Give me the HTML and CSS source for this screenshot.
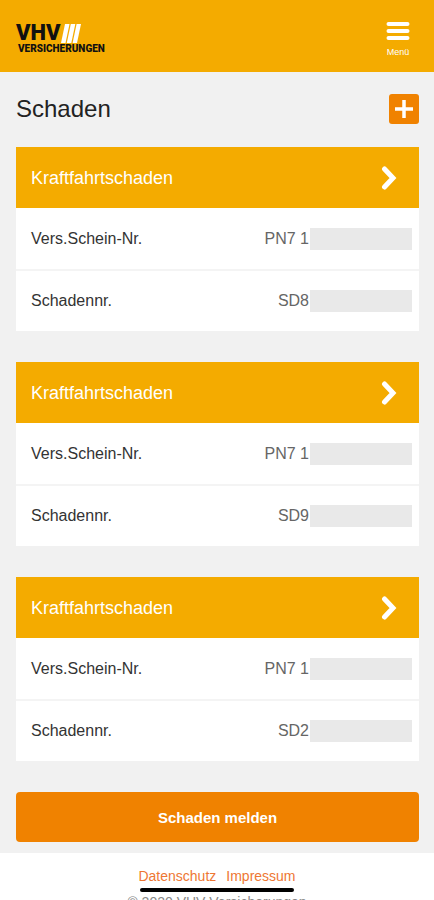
FILE: index.html
```html
<!DOCTYPE html>
<html lang="de">
<head>
    <meta charset="UTF-8">
    <meta name="viewport" content="width=device-width, initial-scale=1.0">
    <title>VHV Versicherungen - Schaden</title>
    <link rel="stylesheet" href="styles.css">
</head>
<body>
    <header class="header">
        <a href="#" class="logo">
            <span class="logo-top">
                VHV
                <svg class="logo-stripes" width="20" height="19" viewBox="0 0 20 19" fill="#fff" aria-hidden="true">
                    <path d="M4 0h4.500l-4 19H0z"/>
                    <path d="M9.800 0h4.500l-4 19H5.800z"/>
                    <path d="M15.600 0H20l-4 19h-4.400z"/>
                </svg>
            </span>
            <span class="logo-sub">VERSICHERUNGEN</span>
        </a>
        <button type="button" class="menu-button">
            <svg width="24" height="20" viewBox="0 0 24 20" stroke="#fff" stroke-width="4" stroke-linecap="round" aria-hidden="true">
                <path d="M2.500 3h19M2.500 10h19M2.500 17h19"/>
            </svg>
            <span>Menü</span>
        </button>
    </header>

    <main class="main">
        <div class="title-row">
            <h1>Schaden</h1>
            <button type="button" class="add-button" aria-label="Schaden hinzufügen">
                <svg width="18" height="18" viewBox="0 0 18 18" stroke="#fff" stroke-width="3.500" aria-hidden="true">
                    <path d="M9 0v18M0 9h18"/>
                </svg>
            </button>
        </div>

        <section class="card">
            <a href="#" class="card-head">
                <h2>Kraftfahrtschaden</h2>
                <svg width="16" height="24" viewBox="0 0 16 24" fill="none" stroke="#fff" stroke-width="5" stroke-linecap="round" aria-hidden="true">
                    <path d="M3.500 3l8.500 9-8.500 9"/>
                </svg>
            </a>
            <dl class="card-rows">
                <div class="row">
                    <dt>Vers.Schein-Nr.</dt>
                    <dd>PN7 1<span class="masked"></span></dd>
                </div>
                <div class="row">
                    <dt>Schadennr.</dt>
                    <dd>SD8<span class="masked"></span></dd>
                </div>
            </dl>
        </section>

        <section class="card">
            <a href="#" class="card-head">
                <h2>Kraftfahrtschaden</h2>
                <svg width="16" height="24" viewBox="0 0 16 24" fill="none" stroke="#fff" stroke-width="5" stroke-linecap="round" aria-hidden="true">
                    <path d="M3.500 3l8.500 9-8.500 9"/>
                </svg>
            </a>
            <dl class="card-rows">
                <div class="row">
                    <dt>Vers.Schein-Nr.</dt>
                    <dd>PN7 1<span class="masked"></span></dd>
                </div>
                <div class="row">
                    <dt>Schadennr.</dt>
                    <dd>SD9<span class="masked"></span></dd>
                </div>
            </dl>
        </section>

        <section class="card">
            <a href="#" class="card-head">
                <h2>Kraftfahrtschaden</h2>
                <svg width="16" height="24" viewBox="0 0 16 24" fill="none" stroke="#fff" stroke-width="5" stroke-linecap="round" aria-hidden="true">
                    <path d="M3.500 3l8.500 9-8.500 9"/>
                </svg>
            </a>
            <dl class="card-rows">
                <div class="row">
                    <dt>Vers.Schein-Nr.</dt>
                    <dd>PN7 1<span class="masked"></span></dd>
                </div>
                <div class="row">
                    <dt>Schadennr.</dt>
                    <dd>SD2<span class="masked"></span></dd>
                </div>
            </dl>
        </section>

        <button type="button" class="report-button">Schaden melden</button>
    </main>

    <footer class="footer">
        <nav class="footer-links">
            <a href="#">Datenschutz</a>
            <a href="#">Impressum</a>
        </nav>
        <p>© 2020 VHV Versicherungen</p>
    </footer>

    <div class="home-indicator"></div>
</body>
</html>
```

FILE: styles.css
```css
* {
    margin: 0;
    padding: 0;
    box-sizing: border-box;
}

body {
    height: 100vh;
    overflow: hidden;
    background: #fff;
    color: #333;
    font-family: 'Liberation Sans', Arial, sans-serif;
    font-size: 16px;
}

a {
    text-decoration: none;
}

button {
    border: none;
    color: #fff;
    font-family: inherit;
    cursor: pointer;
}

svg {
    display: block;
}

/* Header */
.header {
    display: flex;
    justify-content: space-between;
    align-items: center;
    height: 72px;
    padding: 6px 24px 0 16px;
    background: #f4ab00;
}

.logo {
    display: flex;
    flex-direction: column;
    color: #111;
    font-family: Roboto, 'Liberation Sans', sans-serif;
    font-weight: 900;
}

.logo-top {
    display: flex;
    align-items: center;
    font-size: 22px;
    line-height: 20px;
}

.logo-sub {
    padding-left: 2px;
    font-size: 10px;
    line-height: 12px;
}

.menu-button {
    display: flex;
    flex-direction: column;
    align-items: center;
    gap: 5px;
    background: none;
    font-size: 9px;
    line-height: 12px;
}

/* Content */
.main {
    display: flex;
    flex-direction: column;
    padding: 22px 15px 11px 16px;
    background: #f1f1f1;
}

.title-row {
    display: flex;
    justify-content: space-between;
    align-items: center;
    margin-bottom: 23px;
}

h1 {
    color: #222;
    font-size: 24px;
    font-weight: normal;
    line-height: 30px;
}

.add-button {
    display: flex;
    justify-content: center;
    align-items: center;
    width: 30px;
    height: 30px;
    background: #f08200;
    border-radius: 3px;
}

.card {
    margin-bottom: 31px;
    background: #fff;
}

.card-head {
    display: flex;
    justify-content: space-between;
    align-items: center;
    height: 61px;
    padding: 0 22px 0 15px;
    background: #f4ab00;
    color: #fff;
}

h2 {
    font-size: 18px;
    font-weight: normal;
    line-height: 24px;
}

.row {
    display: flex;
    justify-content: space-between;
    align-items: center;
    height: 61px;
    padding: 0 7px 0 15px;
}

.row + .row {
    height: 62px;
    border-top: 2px solid #f4f4f4;
}

.row dd {
    display: flex;
    align-items: center;
    gap: 1px;
    color: #666;
}

/* Hidden part of the contract number */
.masked {
    width: 102px;
    height: 22px;
    background: #e9e9e9;
}

.report-button {
    height: 50px;
    background: #f08200;
    border-radius: 4px;
    font-size: 15px;
    font-weight: bold;
}

/* Footer */
.footer {
    padding-top: 13px;
    text-align: center;
    color: #888;
    font-size: 14px;
    line-height: 20px;
}

.footer-links {
    display: flex;
    justify-content: center;
    gap: 10px;
    margin-bottom: 6px;
}

.footer-links a {
    color: #ee7733;
}

.home-indicator {
    position: fixed;
    bottom: 8px;
    left: 50%;
    width: 154px;
    height: 4px;
    background: #000;
    border-radius: 2px;
    transform: translateX(-50%);
}
```
